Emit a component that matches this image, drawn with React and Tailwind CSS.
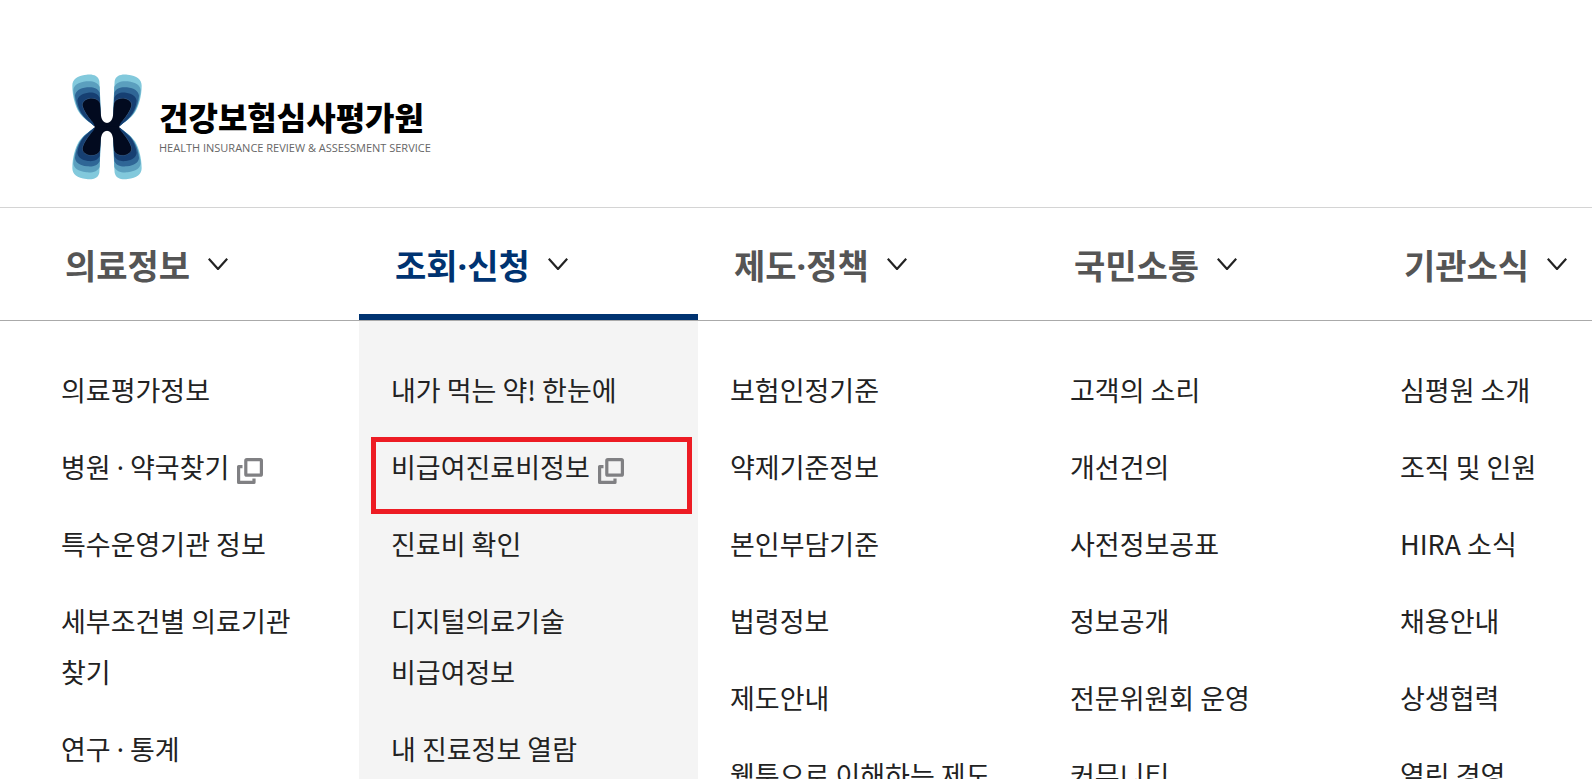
const columns = [
  {
    title: "의료정보",
    items: [
      { label: "의료평가정보" },
      { label: "병원 · 약국찾기", newWindow: true },
      { label: "특수운영기관 정보" },
      { label: "세부조건별 의료기관 찾기" },
      { label: "연구 · 통계" },
    ],
  },
  {
    title: "조회·신청",
    active: true,
    items: [
      { label: "내가 먹는 약! 한눈에" },
      { label: "비급여진료비정보", newWindow: true, highlighted: true },
      { label: "진료비 확인" },
      { label: "디지털의료기술 비급여정보" },
      { label: "내 진료정보 열람" },
    ],
  },
  {
    title: "제도·정책",
    items: [
      { label: "보험인정기준" },
      { label: "약제기준정보" },
      { label: "본인부담기준" },
      { label: "법령정보" },
      { label: "제도안내" },
      { label: "웹툰으로 이해하는 제도" },
    ],
  },
  {
    title: "국민소통",
    items: [
      { label: "고객의 소리" },
      { label: "개선건의" },
      { label: "사전정보공표" },
      { label: "정보공개" },
      { label: "전문위원회 운영" },
      { label: "커뮤니티" },
    ],
  },
  {
    title: "기관소식",
    items: [
      { label: "심평원 소개" },
      { label: "조직 및 인원" },
      { label: "HIRA 소식" },
      { label: "채용안내" },
      { label: "상생협력" },
      { label: "열린 경영" },
    ],
  },
];

const gridClass = "grid grid-cols-[330fr_339fr_340fr_330fr_224fr] pl-[29px]";

// The Korean font's middle dot is half an em wide, so take it from Noto Sans.
function Label({ text }) {
  const [before, after] = text.split("·");
  if (after === undefined) return text;
  return (
    <span>
      {before}
      <span className="font-['Noto_Sans',sans-serif] leading-none">·</span>
      {after}
    </span>
  );
}

function LogoWing() {
  return (
    <>
      <path fill="#82c9dc" d="M122 198 C120 150 120 100 117 62 C114 45 96 40 78 43 C50 46 36 57 36 76 C36 105 44 136 56 156 C67 173 86 184 99 194 Z" />
      <path fill="#5b9fbe" d="M122 198 C120 155 120 115 118 80 C113 66 97 61 78 63 C53 66 40 76 39 90 C41 118 50 144 62 161 C72 176 88 186 100 195 Z" />
      <path fill="#2f6696" d="M122 198 C120 160 120 125 118 97 C113 83 97 79 80 81 C58 84 46 92 44 106 C46 128 54 150 66 165 C76 178 90 187 101 196 Z" />
      <path fill="#163f72" d="M122 198 C120 165 120 135 118 112 C112 99 99 95 83 97 C64 100 53 108 51 121 C53 138 60 156 70 168 C80 180 92 188 101 197 Z" />
      <path fill="#020a1f" stroke="#6f8fa8" strokeWidth="1" d="M122 180 C120 165 120 145 118 127 C112 116 99 113 86 115 C73 118 65 126 67 137 C71 151 80 165 94 182" />
      <path fill="#020a1f" d="M141 188 C129 187 123 178 121 160 C120 147 120 137 118 128 C112 117 99 114 87 116 C74 119 66 127 68 138 C72 152 82 166 93 180 C99 188 103 193 103 200 L141 200 Z" />
    </>
  );
}

function LogoMark() {
  return (
    <svg className="h-[106px] w-[70px] shrink-0" viewBox="35 42 210 316" aria-hidden="true">
      <LogoWing />
      <g transform="translate(280 0) scale(-1 1)">
        <LogoWing />
      </g>
      <g transform="translate(0 399) scale(1 -1)">
        <LogoWing />
      </g>
      <g transform="translate(280 399) scale(-1 -1)">
        <LogoWing />
      </g>
    </svg>
  );
}

function Chevron() {
  return (
    <svg className="h-3 w-5 shrink-0" viewBox="0 0 20 12" fill="none" stroke="#222" strokeWidth="2.2" aria-hidden="true">
      <path d="M.8 .8L10 11L19.2 .8" />
    </svg>
  );
}

function NewWindowIcon() {
  return (
    <svg className="ml-2 inline-block size-[26px]" viewBox="0 0 26 26" fill="none" stroke="#808083" strokeWidth="3.2" strokeLinejoin="round" role="img" aria-label="새창">
      <rect x="8.8" y="1.6" width="15.6" height="15.6" rx="1" />
      <path d="M5.5 8.6H1.6V24.4H17V20.5" />
    </svg>
  );
}

export default function App() {
  return (
    <div className="h-screen overflow-hidden bg-white font-['Noto_Sans_CJK_KR',sans-serif] break-keep">
      <header className="border-b border-[#d4d4d4] pt-[74px] pb-[27px] pl-[72px]">
        <a href="#" className="inline-flex items-center gap-[17px] align-top">
          <LogoMark />
          <span className="flex flex-col gap-1 pb-0.5">
            <span className="text-[32px] leading-10 font-black text-black">건강보험심사평가원</span>
            <span className="font-['Open_Sans',sans-serif] text-[11px] leading-4 text-[#666]">
              HEALTH INSURANCE REVIEW &amp; ASSESSMENT SERVICE
            </span>
          </span>
        </a>
      </header>

      <nav>
        <div className={`${gridClass} border-b border-[#aaa]`}>
          {columns.map((col) => (
            <button
              key={col.title}
              type="button"
              className={`flex h-28 items-center gap-[18px] border-y-6 border-t-transparent pl-9 text-[34px] font-bold whitespace-nowrap ${
                col.active ? "border-b-[#003371] text-[#003371]" : "border-b-transparent text-[#555]"
              }`}
            >
              <Label text={col.title} />
              <Chevron />
            </button>
          ))}
        </div>

        <div className={gridClass}>
          {columns.map((col) => (
            <ul
              key={col.title}
              className={`flex min-h-[460px] flex-col gap-[26px] px-8 pt-[43px] text-[27px] leading-[51px] text-[#222] ${
                col.active ? "bg-[#f4f4f4]" : ""
              }`}
            >
              {col.items.map((item) => (
                <li key={item.label} className="relative">
                  <a href="#">
                    <Label text={item.label} />
                    {item.newWindow && <NewWindowIcon />}
                  </a>
                  {item.highlighted && (
                    <span className="pointer-events-none absolute -top-1 -right-[26px] -bottom-[22px] -left-5 border-5 border-[#ed1c24]" />
                  )}
                </li>
              ))}
            </ul>
          ))}
        </div>
      </nav>
    </div>
  );
}
